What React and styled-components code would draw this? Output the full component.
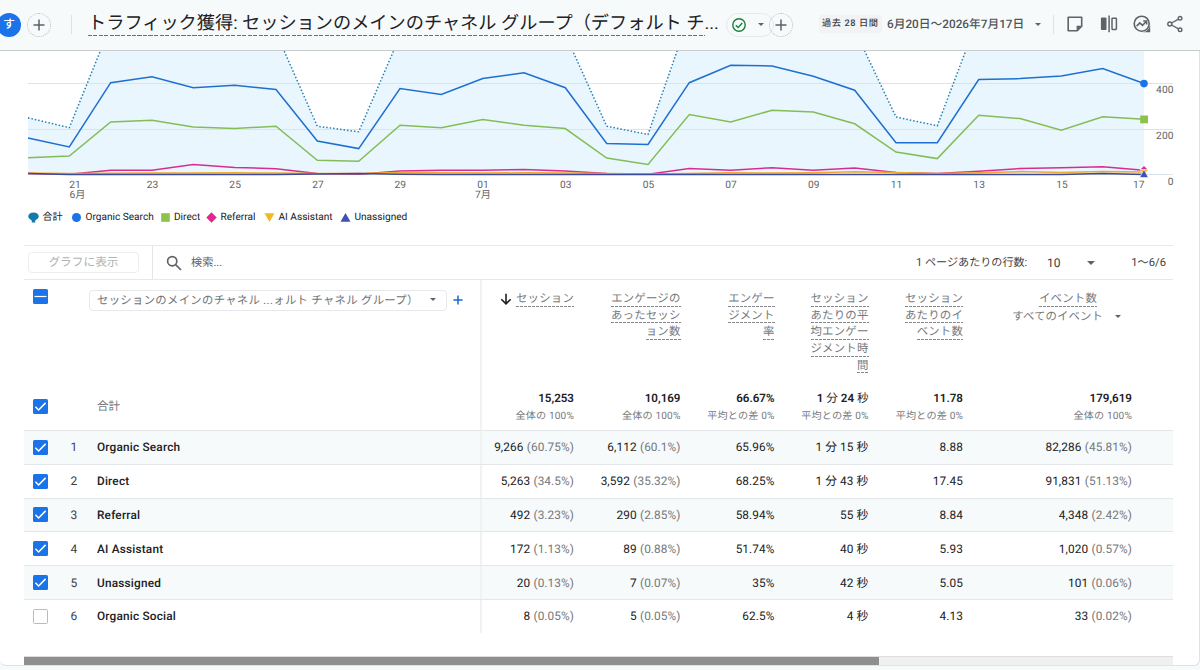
import React from 'react';
import styled, { createGlobalStyle } from 'styled-components';

const GlobalStyle = createGlobalStyle`
  * {
    box-sizing: border-box;
  }

  body {
    margin: 0;
    background: #f7fafb;
    color: #202124;
    font-family: Roboto, "Noto Sans CJK JP", sans-serif;
    text-rendering: geometricPrecision;
    overflow: hidden;
  }
`;

// CHART DATA (vertical positions on the plot, one per day)
const STEP = 1116 / 27;
const BASE = 174.4;

const total = [
  117.8, 127.7, 25.4, 14, 20, 18, 32.5, 126.2, 131.8, 36, 34, 20, 16, 34.4,
  126.2, 134.5, 16, 10, 5, 15, 30, 117, 125.8, 16.6, 14, 18, 10, 20
];
const organic = [
  138, 147, 82.7, 76.8, 87.7, 85.2, 89.5, 141, 148.6, 88.6, 94.5, 78.6, 72.7, 87.7,
  143.5, 144.5, 82.7, 65.2, 66, 76.2, 90.2, 142.7, 142.7, 79.5, 78.6, 76, 68.6, 83.5
];
const direct = [
  157.8, 156, 122, 120.2, 127, 128.6, 126.2, 160.3, 161.2, 125.3, 127.8, 119.4, 125.3, 128.6,
  158, 164.4, 114.5, 122, 110.3, 112, 123.8, 152, 158.6, 115.2, 118.6, 130.2, 116.8, 119.3
];
const referral = [
  173.6, 174.3, 170.3, 170.3, 164.4, 167.5, 168.7, 173.6, 174.3, 171, 170.3, 170.3, 169.5, 171,
  173.6, 174.3, 168.6, 170.3, 167.7, 170.3, 167.9, 172.6, 173.6, 171.2, 168.6, 167.8, 166.8, 170.2
];
const assistant = [
  173, 173.4, 173.2, 173, 173, 172.8, 173, 173.4, 173.6, 172.6, 172.8, 173, 172.8, 173,
  173.4, 174, 173.4, 172.8, 173, 172.8, 171.8, 172.6, 173.4, 172.8, 171.6, 172.4, 171.6, 172
];
const unassigned = [
  173.6, 174.4, 174.4, 174.4, 174.4, 174.4, 174.4, 174, 173.6, 174.2, 174.4, 174.4, 174.4, 174.4,
  174.4, 174.4, 174.4, 174.4, 174.4, 174.4, 174.4, 174.4, 174.4, 174.4, 174.4, 174.4, 173.6, 174.4
];

const ticks = [
  { x: 75, label: '21', month: '6月', monthX: 77.5 },
  { x: 152.5, label: '23' },
  { x: 235.2, label: '25' },
  { x: 318, label: '27' },
  { x: 400.3, label: '29' },
  { x: 483, label: '01', month: '7月', monthX: 483 },
  { x: 565.8, label: '03' },
  { x: 648.5, label: '05' },
  { x: 731, label: '07' },
  { x: 813.8, label: '09' },
  { x: 896.5, label: '11' },
  { x: 979.2, label: '13' },
  { x: 1062, label: '15' },
  { x: 1138.8, label: '17' }
];

// TABLE DATA
const columns = [
  { lines: ['セッション'], total: '15,253', note: '全体の 100%', sorted: true },
  { lines: ['エンゲージの', 'あったセッシ', 'ョン数'], total: '10,169', note: '全体の 100%' },
  { lines: ['エンゲー', 'ジメント', '率'], total: '66.67%', note: '平均との差 0%' },
  { lines: ['セッション', 'あたりの平', '均エンゲー', 'ジメント時', '間'], total: '1 分 24 秒', note: '平均との差 0%' },
  { lines: ['セッション', 'あたりのイ', 'ベント数'], total: '11.78', note: '平均との差 0%' }
];

const rows = [
  { name: 'Organic Search', checked: true, cells: [['9,266', '(60.75%)'], ['6,112', '(60.1%)'], ['65.96%'], ['1 分 15 秒'], ['8.88'], ['82,286', '(45.81%)']] },
  { name: 'Direct', checked: true, cells: [['5,263', '(34.5%)'], ['3,592', '(35.32%)'], ['68.25%'], ['1 分 43 秒'], ['17.45'], ['91,831', '(51.13%)']] },
  { name: 'Referral', checked: true, cells: [['492', '(3.23%)'], ['290', '(2.85%)'], ['58.94%'], ['55 秒'], ['8.84'], ['4,348', '(2.42%)']] },
  { name: 'AI Assistant', checked: true, cells: [['172', '(1.13%)'], ['89', '(0.88%)'], ['51.74%'], ['40 秒'], ['5.93'], ['1,020', '(0.57%)']] },
  { name: 'Unassigned', checked: true, cells: [['20', '(0.13%)'], ['7', '(0.07%)'], ['35%'], ['42 秒'], ['5.05'], ['101', '(0.06%)']] },
  { name: 'Organic Social', checked: false, cells: [['8', '(0.05%)'], ['5', '(0.05%)'], ['62.5%'], ['4 秒'], ['4.13'], ['33', '(0.02%)']] }
];

const Page = styled.div`
  width: 1200px;
  height: 670px;
  overflow: hidden;
`;

const Header = styled.header`
  display: flex;
  align-items: center;
  height: 51px;
  padding-bottom: 2px;
  background: #f7fafb;
  border-bottom: 1px solid #c8cccf;
`;

const Badge = styled.div`
  width: 24px;
  height: 24px;
  margin: 2px 0 0 -3px;
  border-radius: 50%;
  background: #1a73e8;
  color: #fff;
  font-size: 12px;
  font-weight: 500;
  line-height: 23px;
  text-align: center;
`;

const AddButton = styled.div`
  display: flex;
  align-items: center;
  justify-content: center;
  flex: none;
  width: 24px;
  height: 24px;
  margin: 1px 0 0 ${props => props.$gap}px;
  border: 1px dotted #b9bdc0;
  border-radius: 50%;
`;

const Rule = styled.div`
  width: 1px;
  height: 19px;
  margin-left: ${props => props.$gap}px;
  background: #dfe2e5;
`;

const Title = styled.h1`
  display: flex;
  flex: none;
  width: 631px;
  height: 27px;
  margin: 0 0 1px 16px;
  font-size: 18.2px;
  font-weight: 400;
  line-height: 27px;
  white-space: nowrap;
`;

const TitleText = styled.span`
  height: 26px;
  background: repeating-linear-gradient(90deg, #6b6e72 0 4px, transparent 4px 5.5px) left bottom / 100% 1.4px no-repeat;
`;

const Status = styled.div`
  display: flex;
  align-items: center;
  gap: 12px;
  width: 48px;
  height: 24px;
  margin: 1px 0 0 7px;
  padding-left: 5px;
  border: 1px solid #e6e8ea;
  border-radius: 12px;
`;

const Caret = styled.i`
  flex: none;
  width: 0;
  height: 0;
  border: ${props => props.$size || 3.2}px solid transparent;
  border-top-color: #5f6368;
  border-bottom: 0;
`;

const Period = styled.div`
  width: 63px;
  margin-left: 26px;
  padding: 3px 0 3px 3px;
  background: #f1f3f4;
  border-radius: 2px;
  color: #3c4043;
  font-size: 9.2px;
  font-weight: 500;
  letter-spacing: 0.6px;
  line-height: 12px;
  white-space: nowrap;
`;

const DateRange = styled.div`
  width: 148px;
  margin-left: 5px;
  padding-bottom: 1px;
  color: #505458;
  font-size: 11.75px;
  font-weight: 500;
  white-space: nowrap;
`;

const Tools = styled.div`
  display: flex;
  align-items: center;
  margin-left: 11px;
  gap: 13.6px;
`;

const Card = styled.main`
  height: 615px;
  background: #fff;
  border-right: 1px solid #dfe3e6;
  border-bottom: 1px solid #dfe3e6;
  border-radius: 0 0 6px 6px;
`;

const Plot = styled.svg`
  display: block;
  width: 1199px;
  height: 154px;
  font-size: 10.2px;
  letter-spacing: 0.1px;
  fill: #5f6368;
`;

const Legend = styled.div`
  display: flex;
  align-items: center;
  height: 24px;
  padding-left: 28px;
  color: #202124;
  font-size: 10.1px;
  line-height: 15px;
`;

const LegendItem = styled.div`
  display: flex;
  align-items: center;
  gap: 3.5px;
  width: ${props => props.$width}px;
  white-space: nowrap;
`;

const Table = styled.section`
  width: 1149px;
  margin: 16px 0 0 24px;
`;

const Toolbar = styled.div`
  display: flex;
  align-items: center;
  height: 35px;
  border-top: 1px solid #e6e8ea;
  border-bottom: 1px solid #e6e8ea;
  color: #3c4043;
  font-size: 11.5px;
  line-height: 16px;
  white-space: nowrap;
`;

const PlotButton = styled.div`
  width: 111px;
  height: 21px;
  margin: 0 0 1px 4px;
  border: 1px solid #eceef0;
  border-radius: 4px;
  color: #b0b3b6;
  font-size: 11.7px;
  line-height: 18px;
  text-align: center;
`;

const Search = styled.div`
  display: flex;
  align-items: center;
  align-self: stretch;
  gap: 9px;
  width: 764px;
  margin-left: 13px;
  padding-left: 13px;
  border-left: 1px solid #e3e5e8;
  color: #5f6368;
  font-size: 11.2px;
`;

const PerPage = styled.span`
  width: 131px;
  font-size: 11.1px;
`;

const Amount = styled.span`
  width: 40px;
  font-size: 12px;
`;

const Range = styled.span`
  margin-left: auto;
  padding-right: 7px;
  font-size: 11.2px;
`;

const Grid = styled.div`
  display: grid;
  grid-template-columns: 458px 92px 106.5px 94px 94px 94.5px 169px 41px;
  height: ${props => props.$height}px;
  background: ${props => (props.$tinted ? '#f6fafb' : '#fff')};
  border-top: ${props => (props.$line ? '1px solid #e4e7ea' : '0')};
`;

const Lead = styled.div`
  display: flex;
  align-items: center;
  border-right: 2px solid #f0f2f3;
  padding-left: 9px;
`;

const HeadLead = styled(Lead)`
  align-items: flex-start;
  padding-top: 9px;
`;

const Box = styled.span`
  display: flex;
  align-items: center;
  justify-content: center;
  flex: none;
  width: 15px;
  height: 15px;
  border: ${props => (props.$on ? '0' : '1.2px solid #b8babd')};
  border-radius: 1.5px;
  background: ${props => (props.$on ? '#1a73e8' : '#fff')};
`;

const Index = styled.span`
  width: 26.5px;
  margin-left: 22.5px;
  color: #3c4043;
  font-size: 12px;
`;

const Name = styled.span`
  font-size: 11.8px;
  font-weight: 500;
  letter-spacing: 0.2px;
`;

const Dimension = styled.div`
  display: flex;
  align-items: center;
  justify-content: space-between;
  width: 358px;
  height: 21px;
  margin: 1px 0 0 41px;
  padding: 0 10px 2px 7px;
  border: 1px solid #e6e8eb;
  border-radius: 4px;
  color: #6f7377;
  font-size: 11.35px;
  letter-spacing: 0.32px;
  white-space: nowrap;
`;

const AddDimension = styled.span`
  display: flex;
  margin: 6px 0 0 5.5px;
`;

const Metric = styled.div`
  display: flex;
  flex-direction: column;
  align-items: flex-end;
  padding-top: 10px;
`;

const MetricLine = styled.div`
  display: flex;
  position: relative;
  height: 16.7px;
  color: #75797d;
  font-size: 11.4px;
  letter-spacing: 0.2px;
  line-height: 16px;
  white-space: nowrap;
  background: repeating-linear-gradient(90deg, #85888c 0 2.6px, transparent 2.6px 4px) left bottom / 100% 1.2px no-repeat;
`;

const SortArrow = styled.svg`
  position: absolute;
  left: -16px;
  top: 3px;
`;

const EventMetric = styled(Metric)`
  padding-right: 35px;
`;

const EventFilter = styled.div`
  display: flex;
  align-items: center;
  gap: 12px;
  height: 19px;
  margin-right: -24px;
  color: #75797d;
  font-size: 11.4px;
  letter-spacing: 0.1px;
  white-space: nowrap;
`;

const TotalLabel = styled.span`
  margin: 0 0 2px 49px;
  color: #75797d;
  font-size: 11.5px;
`;

const Totals = styled.div`
  display: flex;
  flex-direction: column;
  align-items: flex-end;
  padding-top: 6px;
  white-space: nowrap;
`;

const TotalValue = styled.span`
  height: 18px;
  color: #202124;
  font-size: 11.6px;
  font-weight: 600;
  line-height: 18px;
`;

const Unit = styled.span`
  font-weight: 400;
`;

const TotalNote = styled.span`
  color: #75797d;
  font-size: 10.1px;
  letter-spacing: 0.15px;
  line-height: 20px;
`;

const Cell = styled.div`
  display: flex;
  align-items: center;
  justify-content: flex-end;
  gap: 3.3px;
  color: #202124;
  font-size: 11.8px;
  letter-spacing: 0.1px;
  line-height: 16px;
  white-space: nowrap;
`;

const Value = styled.span`
  height: 16px;
`;

const Share = styled.span`
  height: 16px;
  color: #74777b;
`;

const Scrollbar = styled.div`
  width: 1149px;
  height: 9px;
  margin: 23px 0 0 24px;
  background: #f0f0f0;
  border-top: 1px solid #dedede;
`;

const Thumb = styled.div`
  width: 855px;
  height: 8px;
  background: #8f8f8f;
`;

const toPoints = values => values.map((y, i) => `${(28 + STEP * i).toFixed(1)},${y}`).join(' ');

// time units stay in regular weight next to the figures
const withUnits = value => value.split(/([分秒])/).map((part, i) => (
  /[分秒]/.test(part) ? <Unit key={i}>{part}</Unit> : part
));

const Plus = ({ size = 12, color = '#5f6368', width = 1.5 }) => (
  <svg width={size} height={size} viewBox="0 0 12 12" stroke={color} strokeWidth={width}>
    <path d="M6 .5v11M.5 6h11" />
  </svg>
);

const Checkbox = ({ on, mixed }) => (
  <Box $on={on || mixed}>
    {on && (
      <svg width="15" height="15" viewBox="0 0 15 15" fill="none" stroke="#fff" strokeWidth="1.5">
        <path d="M2.4 7.8 5.6 11 12.6 3.9" />
      </svg>
    )}
    {mixed && (
      <svg width="15" height="15" viewBox="0 0 15 15" stroke="#fff" strokeWidth="1.2">
        <path d="M1.5 7.5h12" />
      </svg>
    )}
  </Box>
);

const ToolIcons = () => (
  <Tools>
    <svg width="20" height="20" viewBox="0 0 20 20" fill="none" stroke="#5f6368" strokeWidth="1.6">
      <path d="M3.2 3.3h13.5v8.9l-4.5 4.5h-9z" strokeLinejoin="round" />
      <path d="M11.6 16.7v-5h5.1z" fill="#5f6368" stroke="none" />
    </svg>
    <svg width="20" height="20" viewBox="0 0 20 20" fill="none" stroke="#5f6368" strokeWidth="1.5">
      <rect x="1.9" y="3.5" width="5.6" height="12.6" rx="1" fill="#5f6368" stroke="none" />
      <path d="M10.1 1.4v16.8" />
      <rect x="13" y="4.2" width="4.4" height="11.2" rx=".6" />
    </svg>
    <svg width="20" height="20" viewBox="0 0 20 20" fill="none" stroke="#5f6368" strokeWidth="1.6">
      <circle cx="9.7" cy="9.7" r="7.5" />
      <path d="m4.6 12.1 3.2-3.2 2.7 2.5 3.7-3.9" />
      <path d="M11.2 7h3.4v3.4" />
      <path d="M18.2 10.4v7.8h-7.8c4.4-.6 7.2-3.6 7.8-7.8z" fill="#5f6368" stroke="none" />
    </svg>
    <svg width="18" height="20" viewBox="0 0 18 20" fill="none" stroke="#5f6368" strokeWidth="1.4">
      <circle cx="3.8" cy="10" r="2" />
      <circle cx="14.1" cy="4.3" r="1.8" />
      <circle cx="14.1" cy="15.8" r="1.8" />
      <path d="m5.6 9 6.9-3.8M5.6 11l6.9 3.9" />
    </svg>
  </Tools>
);

const Chart = () => (
  <Plot viewBox="0 51 1199 154">
    <polygon points={`28,${BASE} ${toPoints(total)} 1144,${BASE}`} fill="#e9f6fe" />
    <g stroke="#dbe4ea" strokeWidth="1">
      <path d="M28 83.5h1145M28 129.5h1145M28 174.5h1145" />
    </g>
    <g fill="none" strokeWidth="1.5">
      <polyline points={toPoints(total)} stroke="#2380b5" strokeDasharray="1.5 2" />
      <polyline points={toPoints(organic)} stroke="#1f6fd0" />
      <polyline points={toPoints(direct)} stroke="#84bd55" />
      <polyline points={toPoints(referral)} stroke="#d92c93" />
      <polyline points={toPoints(assistant)} stroke="#f0a830" />
      <polyline points={toPoints(unassigned)} stroke="#3a4a9c" />
    </g>
    <circle cx="1144" cy="83.6" r="3.8" fill="#1a73e8" />
    <rect x="1140.2" y="115.5" width="7.8" height="7.8" fill="#8bc34a" />
    <path d="m1144 166 4 4-4 4-4-4z" fill="#e52592" />
    <path d="M1140 169.5h8l-4 6z" fill="#f4b91e" stroke="#fff" strokeWidth=".6" />
    <path d="m1144 169.5 4.3 8h-8.6z" fill="#3f51b5" stroke="#fff" strokeWidth=".6" />
    <g textAnchor="middle">
      {ticks.map(tick => (
        <text key={tick.label} x={tick.x} y="188">{tick.label}</text>
      ))}
      {ticks.filter(tick => tick.month).map(tick => (
        <text key={tick.month} x={tick.monthX} y="198">{tick.month}</text>
      ))}
    </g>
    <g textAnchor="end">
      <text x="1173.6" y="93">400</text>
      <text x="1173.6" y="139">200</text>
      <text x="1173.6" y="185">0</text>
    </g>
  </Plot>
);

const markers = [
  { label: '合計', width: 43, color: '#137bab', d: 'M.2 4.2C.4 2 2.6.4 5.5.4s5.1 1.6 5.3 3.8C11 5.8 8.2 7.8 7.2 8.6V10.4H3.8V8.6C2.8 7.8 0 5.8.2 4.2z' },
  { label: 'Organic Search', width: 88.5, color: '#1a73e8', d: 'M1 5.5a4.5 4.5 0 1 1 9 0 4.5 4.5 0 0 1-9 0z' },
  { label: 'Direct', width: 46.5, color: '#8bc34a', d: 'M1.2 1.2h8.6v8.6H1.2z' },
  { label: 'Referral', width: 58, color: '#e52592', d: 'm5.5.3 5.2 5.2-5.2 5.2L.3 5.5z' },
  { label: 'AI Assistant', width: 76, color: '#f4b91e', d: 'M.5 1.3h10l-5 8.6z' },
  { label: 'Unassigned', width: 80, color: '#3f51b5', d: 'M5.5 1.1 10.5 9.7H.5z' }
];

const Metrics = () => (
  <>
    {columns.map((column, i) => (
      <Metric key={i}>
        {column.lines.map((line, j) => (
          <MetricLine key={line}>
            {column.sorted && j === 0 && (
              <SortArrow width="12" height="12" viewBox="0 0 12 12" fill="none" stroke="#202124" strokeWidth="1.6">
                <path d="M6 .7v10M1.3 6.2 6 10.8l4.7-4.6" />
              </SortArrow>
            )}
            {line}
          </MetricLine>
        ))}
      </Metric>
    ))}
    <EventMetric>
      <MetricLine>イベント数</MetricLine>
      <EventFilter>すべてのイベント<Caret /></EventFilter>
    </EventMetric>
  </>
);

const App = () => (
  <Page>
    <GlobalStyle />
    <Header>
      <Badge>す</Badge>
      <AddButton $gap={6}><Plus /></AddButton>
      <Rule $gap={20} />
      <Title><TitleText>トラフィック獲得: セッションのメインのチャネル グループ（デフォルト チ</TitleText>...</Title>
      <Status>
        <svg width="14" height="14" viewBox="0 0 14 14" fill="none" stroke="#188038" strokeWidth="1.4">
          <circle cx="7" cy="7" r="6.2" />
          <path d="M3.8 7.2 6.1 9.4 10.3 5" />
        </svg>
        <Caret />
      </Status>
      <AddButton $gap={-5}><Plus /></AddButton>
      <Period>過去 28 日間</Period>
      <DateRange>6月20日～2026年7月17日</DateRange>
      <Caret />
      <Rule $gap={12} />
      <ToolIcons />
    </Header>
    <Card>
      <Chart />
      <Legend>
        {markers.map(marker => (
          <LegendItem key={marker.label} $width={marker.width}>
            <svg width="11" height="11" viewBox="0 0 11 11" fill={marker.color}>
              <path d={marker.d} />
            </svg>
            {marker.label}
          </LegendItem>
        ))}
      </Legend>
      <Table>
        <Toolbar>
          <PlotButton>グラフに表示</PlotButton>
          <Search>
            <svg width="16" height="16" viewBox="0 0 16 16" fill="none" stroke="#5f6368" strokeWidth="1.7">
              <circle cx="6.2" cy="6.2" r="4.6" />
              <path d="m9.6 9.6 5.4 5.4" />
            </svg>
            検索...
          </Search>
          <PerPage>1 ページあたりの行数:</PerPage>
          <Amount>10</Amount>
          <Caret $size={4} />
          <Range>1～6/6</Range>
        </Toolbar>
        <Grid $height={103}>
          <HeadLead>
            <Checkbox mixed />
            <Dimension>セッションのメインのチャネル ...ォルト チャネル グループ）<Caret /></Dimension>
            <AddDimension><Plus size={10} color="#1967d2" width={1.8} /></AddDimension>
          </HeadLead>
          <Metrics />
        </Grid>
        <Grid $height={47}>
          <Lead>
            <Checkbox on />
            <TotalLabel>合計</TotalLabel>
          </Lead>
          {columns.map((column, i) => (
            <Totals key={i}>
              <TotalValue>{withUnits(column.total)}</TotalValue>
              <TotalNote>{column.note}</TotalNote>
            </Totals>
          ))}
          <Totals>
            <TotalValue>179,619</TotalValue>
            <TotalNote>全体の 100%</TotalNote>
          </Totals>
        </Grid>
        {rows.map((row, i) => (
          <Grid key={row.name} $height={33.8} $tinted={i % 2 === 0} $line>
            <Lead>
              <Checkbox on={row.checked} />
              <Index>{i + 1}</Index>
              <Name>{row.name}</Name>
            </Lead>
            {row.cells.map(([value, share], j) => (
              <Cell key={j}>
                <Value>{value}</Value>
                {share && <Share>{share}</Share>}
              </Cell>
            ))}
          </Grid>
        ))}
      </Table>
      <Scrollbar>
        <Thumb />
      </Scrollbar>
    </Card>
  </Page>
);

export default App;
